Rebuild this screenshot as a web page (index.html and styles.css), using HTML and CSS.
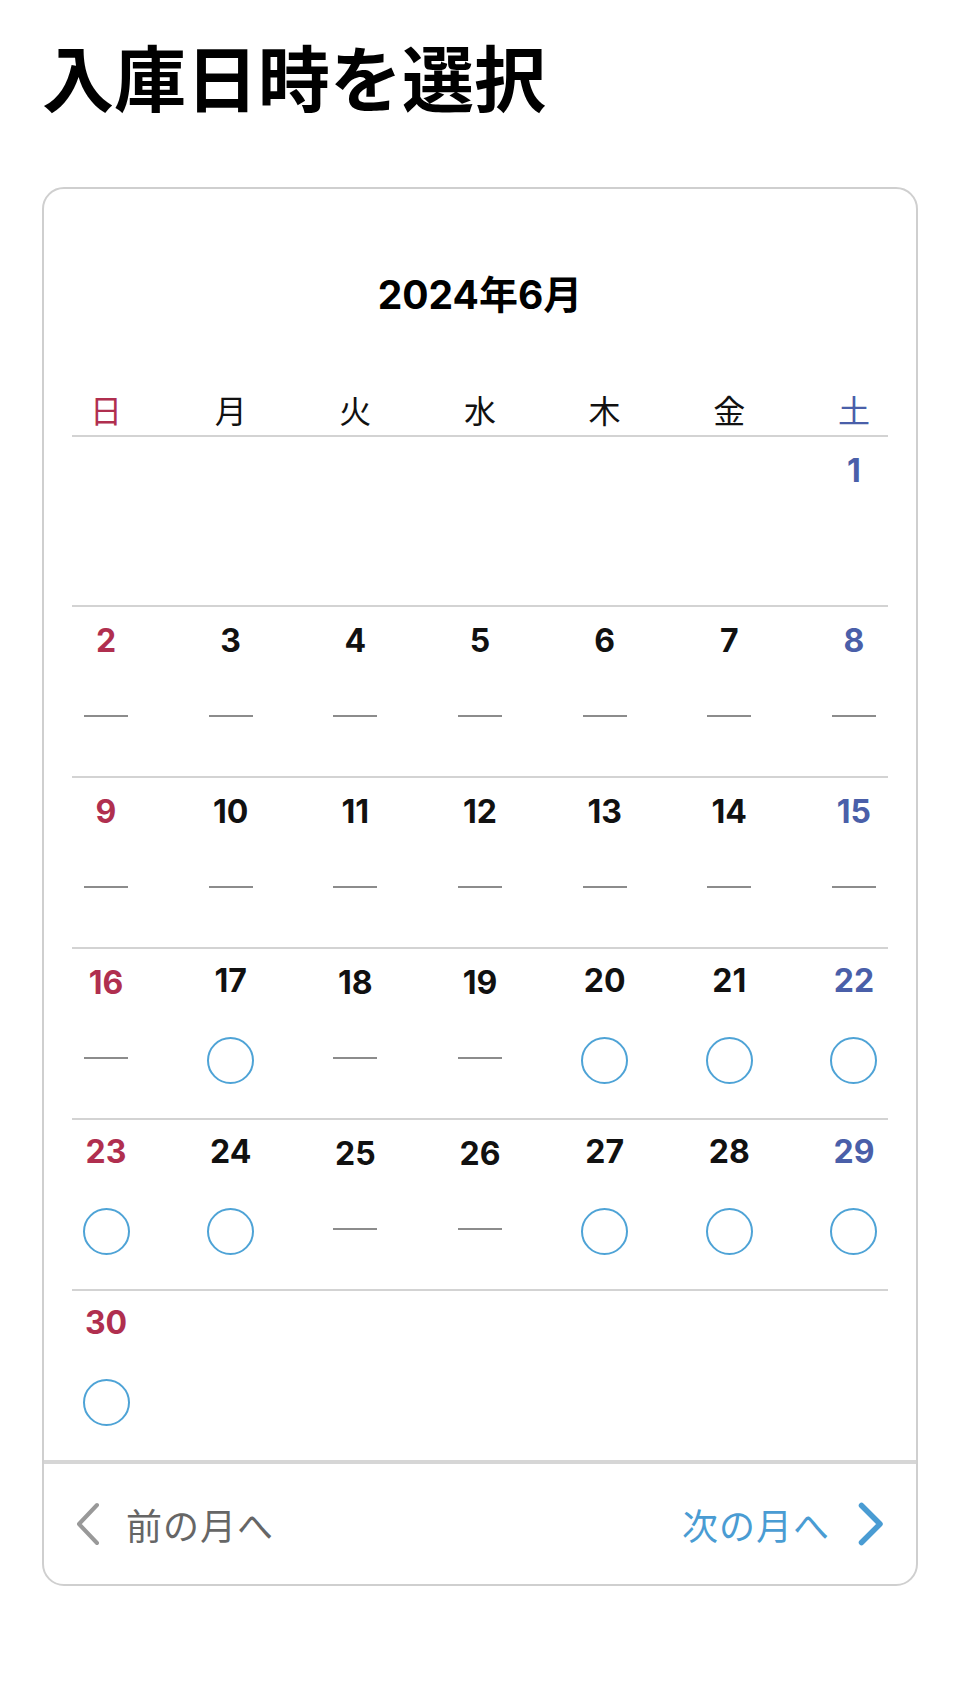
FILE: index.html
```html
<!DOCTYPE html>
<html lang="ja">
<head>
    <meta charset="utf-8">
    <meta name="viewport" content="width=device-width, initial-scale=1.0">
    <title>入庫日時を選択</title>
    <link rel="stylesheet" href="styles.css">
</head>
<body>
    <div id="page">
        <h1 class="page-title">入庫日時を選択</h1>

        <div class="calendar">
            <div class="month">2024年6月</div>

            <div class="weekdays">
                <div class="sun">日</div>
                <div>月</div>
                <div>火</div>
                <div>水</div>
                <div>木</div>
                <div>金</div>
                <div class="sat">土</div>
            </div>

            <!-- week 1 -->
            <div class="week">
                <div class="day"></div>
                <div class="day"></div>
                <div class="day"></div>
                <div class="day"></div>
                <div class="day"></div>
                <div class="day"></div>
                <div class="day sat"><span class="num">1</span></div>
            </div>

            <!-- week 2 -->
            <div class="week">
                <div class="day sun"><span class="num">2</span><span class="mark"><i class="dash"></i></span></div>
                <div class="day"><span class="num">3</span><span class="mark"><i class="dash"></i></span></div>
                <div class="day"><span class="num">4</span><span class="mark"><i class="dash"></i></span></div>
                <div class="day"><span class="num">5</span><span class="mark"><i class="dash"></i></span></div>
                <div class="day"><span class="num">6</span><span class="mark"><i class="dash"></i></span></div>
                <div class="day"><span class="num">7</span><span class="mark"><i class="dash"></i></span></div>
                <div class="day sat"><span class="num">8</span><span class="mark"><i class="dash"></i></span></div>
            </div>

            <!-- week 3 -->
            <div class="week">
                <div class="day sun"><span class="num">9</span><span class="mark"><i class="dash"></i></span></div>
                <div class="day"><span class="num">10</span><span class="mark"><i class="dash"></i></span></div>
                <div class="day"><span class="num">11</span><span class="mark"><i class="dash"></i></span></div>
                <div class="day"><span class="num">12</span><span class="mark"><i class="dash"></i></span></div>
                <div class="day"><span class="num">13</span><span class="mark"><i class="dash"></i></span></div>
                <div class="day"><span class="num">14</span><span class="mark"><i class="dash"></i></span></div>
                <div class="day sat"><span class="num">15</span><span class="mark"><i class="dash"></i></span></div>
            </div>

            <!-- week 4 -->
            <div class="week">
                <div class="day sun"><span class="num">16</span><span class="mark"><i class="dash"></i></span></div>
                <div class="day open"><span class="num">17</span><span class="mark"><i class="circle"></i></span></div>
                <div class="day"><span class="num">18</span><span class="mark"><i class="dash"></i></span></div>
                <div class="day"><span class="num">19</span><span class="mark"><i class="dash"></i></span></div>
                <div class="day open"><span class="num">20</span><span class="mark"><i class="circle"></i></span></div>
                <div class="day open"><span class="num">21</span><span class="mark"><i class="circle"></i></span></div>
                <div class="day sat open"><span class="num">22</span><span class="mark"><i class="circle"></i></span></div>
            </div>

            <!-- week 5 -->
            <div class="week">
                <div class="day sun open"><span class="num">23</span><span class="mark"><i class="circle"></i></span></div>
                <div class="day open"><span class="num">24</span><span class="mark"><i class="circle"></i></span></div>
                <div class="day"><span class="num">25</span><span class="mark"><i class="dash"></i></span></div>
                <div class="day"><span class="num">26</span><span class="mark"><i class="dash"></i></span></div>
                <div class="day open"><span class="num">27</span><span class="mark"><i class="circle"></i></span></div>
                <div class="day open"><span class="num">28</span><span class="mark"><i class="circle"></i></span></div>
                <div class="day sat open"><span class="num">29</span><span class="mark"><i class="circle"></i></span></div>
            </div>

            <!-- week 6 -->
            <div class="week">
                <div class="day sun open"><span class="num">30</span><span class="mark"><i class="circle"></i></span></div>
                <div class="day"></div>
                <div class="day"></div>
                <div class="day"></div>
                <div class="day"></div>
                <div class="day"></div>
                <div class="day"></div>
            </div>

            <div class="month-nav">
                <a class="nav-link prev" href="#">
                    <svg width="24" height="44" viewBox="0 0 24 44"><polyline points="21,3 3,22 21,41" fill="none" stroke="#999" stroke-width="4" stroke-linecap="round" stroke-linejoin="round"/></svg>
                    <span>前の月へ</span>
                </a>
                <a class="nav-link next" href="#">
                    <span>次の月へ</span>
                    <svg width="26" height="44" viewBox="0 0 26 44"><polyline points="3.5,3.5 22,22 3.5,40.5" fill="none" stroke="#4a9cd3" stroke-width="5.5" stroke-linecap="round" stroke-linejoin="round"/></svg>
                </a>
            </div>
        </div>
    </div>
</body>
</html>
```

FILE: styles.css
```css
* {
    box-sizing: border-box;
}
body {
    margin: 0;
    font-family: "Noto Sans CJK JP", "Noto Sans", sans-serif;
    color: #111;
    background-color: #fff;
}
#page {
    padding: 0 42px;
}
.page-title {
    margin: 32px 0 69px;
    font-size: 72px;
    line-height: 86px;
    font-weight: bold;
    color: #000;
}
.calendar {
    border: 2px solid #cfcfcf;
    border-radius: 22px;
    overflow: hidden;
}
.month {
    padding-top: 82px;
    font-family: "Inter", "Noto Sans CJK JP", sans-serif;
    font-size: 39px;
    line-height: 48px;
    font-weight: bold;
    text-align: center;
    color: #000;
}
.weekdays,
.week {
    display: grid;
    grid-template-columns: repeat(7, 68px);
    justify-content: space-between;
    margin: 0 28px;
}
.weekdays {
    margin-top: 70px;
    padding-bottom: 6px;
    border-bottom: 2px solid #d3d3d3;
    font-size: 32px;
    line-height: 40px;
    text-align: center;
    color: #111;
}
.week {
    height: 171px;
    border-top: 2px solid #d3d3d3;
}
.weekdays + .week {
    height: 168px;
    border-top: none;
}
.day {
    display: flex;
    flex-direction: column;
    align-items: center;
    padding-top: 14px;
}
.num {
    font-family: "Inter", "Liberation Sans", sans-serif;
    font-size: 32px;
    line-height: 40px;
    font-weight: bold;
    color: #111;
}
.mark {
    display: flex;
    align-items: center;
    justify-content: center;
    height: 46px;
    margin-top: 34px;
}
.dash {
    display: block;
    width: 44px;
    height: 2px;
    margin-bottom: 4px;
    background-color: #8c8c8c;
}
.circle {
    display: block;
    width: 47px;
    height: 47px;
    border: 2.5px solid #4ea3d6;
    border-radius: 50%;
}
.open .num {
    margin-top: -2px;
    margin-bottom: 2px;
}
.sun,
.sun .num {
    color: #b02f4f;
}
.sat,
.sat .num {
    color: #4a5fa9;
}
.month-nav {
    display: flex;
    justify-content: space-between;
    align-items: center;
    height: 124px;
    padding: 0 32px;
    border-top: 4px solid #d6d6d6;
}
.nav-link {
    display: flex;
    align-items: center;
    font-size: 36px;
    letter-spacing: 1px;
    text-decoration: none;
}
.nav-link svg {
    display: block;
}
.prev {
    gap: 26px;
    color: #666;
}
.next {
    gap: 28px;
    color: #4a9cd3;
}
```
